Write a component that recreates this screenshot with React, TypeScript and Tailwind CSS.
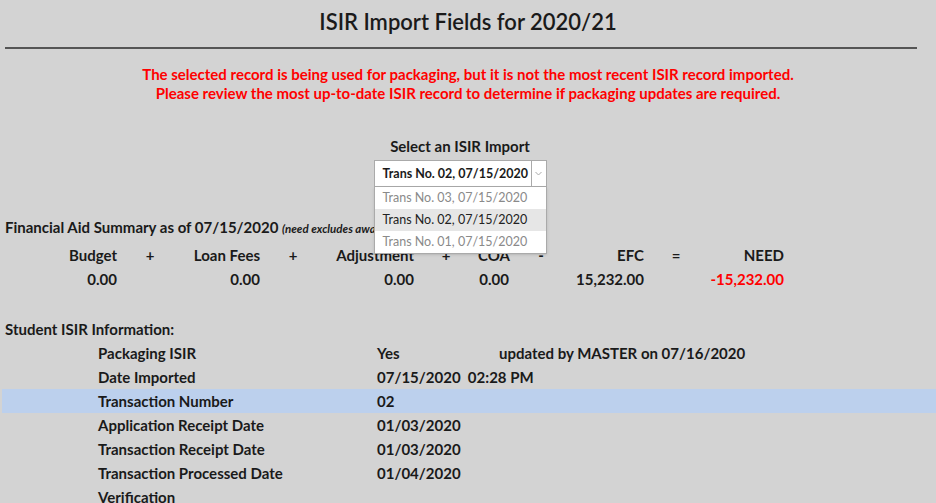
import React from "react";

const summaryCols = [
  { label: "Budget", value: "0.00", w: "w-[117px]" },
  { label: "+", op: true, w: "w-[66px]" },
  { label: "Loan Fees", value: "0.00", w: "w-[77px]" },
  { label: "+", op: true, w: "w-[66px]" },
  { label: "Adjustment", value: "0.00", w: "w-[88px]" },
  { label: "+", op: true, w: "w-[64px]" },
  { label: "COA", value: "0.00", w: "w-[31px]" },
  { label: "-", op: true, w: "w-[64px]" },
  { label: "EFC", value: "15,232.00", w: "w-[71px]" },
  { label: "=", op: true, w: "w-[64px]" },
  { label: "NEED", value: "-15,232.00", w: "w-[76px]", red: true },
];

const isirRows = [
  { label: "Packaging ISIR", value: "Yes", note: "updated by MASTER on 07/16/2020" },
  { label: "Date Imported", value: "07/15/2020\u00a0\u00a002:28 PM" },
  { label: "Transaction Number", value: "02", active: true },
  { label: "Application Receipt Date", value: "01/03/2020" },
  { label: "Transaction Receipt Date", value: "01/03/2020" },
  { label: "Transaction Processed Date", value: "01/04/2020" },
  { label: "Verification", value: "" },
];

const options = ["Trans No. 03, 07/15/2020", "Trans No. 02, 07/15/2020", "Trans No. 01, 07/15/2020"];

export default function App() {
  return (
    <div className="min-h-screen bg-[#d3d3d3] text-[#1a1a1a] font-['Lato','Open_Sans',sans-serif] overflow-hidden h-[503px]">
      {/* 헤더 */}
      <h1 className="pt-[8px] text-center text-[22px] leading-[28px] font-semibold">ISIR Import Fields for 2020/21</h1>
      <div className="ml-[5px] w-[912px] mt-[11px] h-[2px] bg-[#555]" />

      {/* 경고 메시지 */}
      <div className="mt-[16px] text-center text-[15px] leading-[19px] font-bold text-[#ff0000]">
        <p>The selected record is being used for packaging, but it is not the most recent ISIR record imported.</p>
        <p>Please review the most up-to-date ISIR record to determine if packaging updates are required.</p>
      </div>

      {/* ISIR 선택 */}
      <div className="mt-[34px] flex flex-col items-center">
        <div className="text-[15px] leading-[18px] font-bold mr-[16px]">Select an ISIR Import</div>
        <div className="relative mt-[5px] mr-[16px]">
          <div className="flex h-[27px] w-[173px] border border-[#aaa] bg-white">
            <div className="flex-1 pl-[8px] text-[12.5px] font-bold leading-[25px]">Trans No. 02, 07/15/2020</div>
            <div className="w-[15px] border-l border-[#aaa] flex items-center justify-center">
              <svg width="7" height="5" viewBox="0 0 7 5">
                <path d="M0.5 1 L3.5 4 L6.5 1" fill="none" stroke="#aaa" strokeWidth="1" />
              </svg>
            </div>
          </div>
          <ul className="absolute left-0 top-[27px] z-10 w-[173px] border border-t-0 border-[#aaa] bg-white text-[12.5px] leading-[22px] shadow-sm">
            {options.map((o, i) => (
              <li key={o} className={i === 1 ? "bg-[#e6e6e6] pl-[8px] text-[#222]" : "pl-[8px] text-[#8a8a8a]"}>
                {o}
              </li>
            ))}
          </ul>
        </div>
      </div>

      {/* 재정 지원 요약 */}
      <div className="mt-[31px] pl-[5px] text-[15px] leading-[18px] font-bold">
        Financial Aid Summary as of 07/15/2020{" "}
        <span className="text-[11.5px] italic">(need excludes awards with unaccepted amounts):</span>
      </div>
      <div className="mt-[5px] flex text-[15px] font-bold leading-[24px]">
        {summaryCols.map((c, i) => (
          <div key={i} className={`${c.w} shrink-0 ${c.op ? "text-center" : "text-right"}`}>
            <div>{c.label}</div>
            <div className={c.red ? "text-[#ff0000]" : ""}>{c.op ? "\u00a0" : c.value}</div>
          </div>
        ))}
      </div>

      {/* 학생 ISIR 정보 */}
      <div className="mt-[26px] pl-[5px] text-[15px] leading-[24px] font-bold">Student ISIR Information:</div>
      <div className="text-[15px] leading-[24px] font-bold">
        {isirRows.map((r) => (
          <div key={r.label} className={`flex ml-[2px] ${r.active ? "bg-[#bcd0ed]" : ""}`}>
            <div className="w-[375px] pl-[96px] shrink-0">{r.label}</div>
            <div className="w-[122px] shrink-0 whitespace-nowrap">{r.value}</div>
            {r.note && <div>{r.note}</div>}
          </div>
        ))}
      </div>
    </div>
  );
}
